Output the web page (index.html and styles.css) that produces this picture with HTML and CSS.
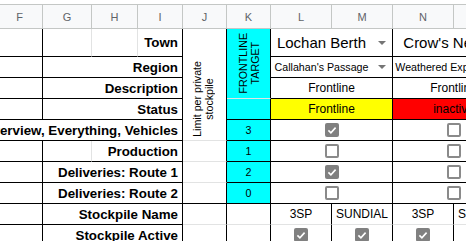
FILE: index.html
```html
<!DOCTYPE html>
<html lang="en">
<head>
    <meta charset="UTF-8">
    <meta name="viewport" content="width=device-width, initial-scale=1.0">
    <title>Stockpile sheet</title>
    <link rel="stylesheet" href="styles.css">
</head>
<body>

<div class="sheet">
    <!-- column headers -->
    <div class="hd">F</div>
    <div class="hd">G</div>
    <div class="hd">H</div>
    <div class="hd">I</div>
    <div class="hd">J</div>
    <div class="hd">K</div>
    <div class="hd">L</div>
    <div class="hd">M</div>
    <div class="hd">N</div>
    <div class="hd">O</div>

    <!-- Town -->
    <div class="c br bb"></div>
    <div class="c bb"></div>
    <div class="c bb"></div>
    <div class="c lbl br bb">Town</div>
    <div class="c br rs5 limit"><span class="rot">Limit per private<br>stockpile</span></div>
    <div class="c br rs3 cyan"><span class="rot">FRONTLINE<br>TARGET</span></div>
    <div class="c cs2 br bb drop big"><span class="val">Lochan Berth</span><i class="arrow"></i></div>
    <div class="c cs2 br bb drop big"><span class="val">Crow's Nest</span><i class="arrow"></i></div>

    <!-- Region -->
    <div class="c br bb"></div>
    <div class="c cs3 lbl br bb">Region</div>
    <div class="c cs2 br bb drop small"><span class="val">Callahan's Passage</span><i class="arrow"></i></div>
    <div class="c cs2 br bb drop small"><span class="val">Weathered Expanse</span><i class="arrow"></i></div>

    <!-- Description -->
    <div class="c br bb"></div>
    <div class="c cs3 lbl br bb">Description</div>
    <div class="c cs2 br bb">Frontline</div>
    <div class="c cs2 br bb">Frontline</div>

    <!-- Status -->
    <div class="c br bb"></div>
    <div class="c cs3 lbl br bb">Status</div>
    <div class="c br bb cyan"></div>
    <div class="c cs2 br bb yellow">Frontline</div>
    <div class="c cs2 br bb red">inactive</div>

    <!-- Tabs -->
    <div class="c cs4 lbl br bb">Overview, Everything, Vehicles</div>
    <div class="c br bb cyan num">3</div>
    <div class="c cs2 br bb"><span class="box on"><svg viewBox="0 0 14 14"><path d="M3.4 7.4 L5.9 9.9 L10.6 4.6"/></svg></span></div>
    <div class="c cs2 br bb"><span class="box"></span></div>

    <!-- Production -->
    <div class="c br bb"></div>
    <div class="c bb"></div>
    <div class="c cs2 lbl br bb">Production</div>
    <div class="c br"></div>
    <div class="c br bb cyan num">1</div>
    <div class="c cs2 br bb"><span class="box"></span></div>
    <div class="c cs2 br bb"><span class="box"></span></div>

    <!-- Deliveries: Route 1 -->
    <div class="c br bb"></div>
    <div class="c cs3 lbl br bb">Deliveries: Route 1</div>
    <div class="c br"></div>
    <div class="c br bb cyan num">2</div>
    <div class="c cs2 br bb"><span class="box on"><svg viewBox="0 0 14 14"><path d="M3.4 7.4 L5.9 9.9 L10.6 4.6"/></svg></span></div>
    <div class="c cs2 br bb"><span class="box"></span></div>

    <!-- Deliveries: Route 2 -->
    <div class="c br bb"></div>
    <div class="c cs3 lbl br bb">Deliveries: Route 2</div>
    <div class="c br bb"></div>
    <div class="c br bb cyan num">0</div>
    <div class="c cs2 br bb"><span class="box"></span></div>
    <div class="c cs2 br bb"><span class="box"></span></div>

    <!-- Stockpile Name -->
    <div class="c br bb"></div>
    <div class="c cs3 lbl br bb">Stockpile Name</div>
    <div class="c br"></div>
    <div class="c br"></div>
    <div class="c br">3SP</div>
    <div class="c br">SUNDIAL</div>
    <div class="c br">3SP</div>
    <div class="c br">SUNDIAL</div>

    <!-- Stockpile Active -->
    <div class="c br bb"></div>
    <div class="c cs3 lbl br bb">Stockpile Active</div>
    <div class="c br"></div>
    <div class="c br"></div>
    <div class="c br"><span class="box on"><svg viewBox="0 0 14 14"><path d="M3.4 7.4 L5.9 9.9 L10.6 4.6"/></svg></span></div>
    <div class="c br"><span class="box on"><svg viewBox="0 0 14 14"><path d="M3.4 7.4 L5.9 9.9 L10.6 4.6"/></svg></span></div>
    <div class="c br"><span class="box on"><svg viewBox="0 0 14 14"><path d="M3.4 7.4 L5.9 9.9 L10.6 4.6"/></svg></span></div>
    <div class="c br"><span class="box on"><svg viewBox="0 0 14 14"><path d="M3.4 7.4 L5.9 9.9 L10.6 4.6"/></svg></span></div>
</div>

</body>
</html>
```

FILE: styles.css
```css
body {
    margin: 0;
    overflow: hidden;
    background-color: #fff;
    font-family: "Liberation Sans", Arial, sans-serif;
    color: #000;
}
.sheet {
    display: grid;
    grid-template-columns: 46px 49px 46px 45px 44px 44px 61px 61px 61px 61px;
    grid-template-rows: 25px 28px repeat(10, 21px);
    width: max-content;
    margin: 4px 0 0 -3px;
}
.hd {
    box-sizing: border-box;
    display: flex;
    align-items: center;
    justify-content: center;
    background-color: #f8f9fa;
    border-top: 1px solid #c4c7c5;
    border-right: 1px solid #c4c7c5;
    border-bottom: 1px solid #c4c7c5;
    color: #5f6368;
    font-size: 11px;
}
.c {
    box-sizing: border-box;
    display: flex;
    align-items: center;
    justify-content: center;
    min-width: 0;
    overflow: hidden;
    white-space: nowrap;
    border-right: 1px solid #e2e3e3;
    border-bottom: 1px solid #e2e3e3;
    font-size: 12px;
}
.br {
    border-right-color: #000;
}
.bb {
    border-bottom-color: #000;
}
.cs2 {
    grid-column: span 2;
}
.cs3 {
    grid-column: span 3;
}
.cs4 {
    grid-column: span 4;
}
.rs3 {
    grid-row: span 3;
}
.rs5 {
    grid-row: span 5;
}
.lbl {
    justify-content: flex-end;
    padding-right: 4px;
    font-weight: bold;
    font-size: 13.33px;
}
.cyan {
    background-color: #00ffff;
}
.yellow {
    background-color: #ffff00;
}
.red {
    background-color: #ff0000;
}
.num {
    font-size: 10.67px;
}
.big {
    font-size: 15px;
}
.small {
    font-size: 10.67px;
}
.drop .val {
    flex: 1;
    text-align: center;
}
.drop .arrow {
    width: 20px;
    display: flex;
    justify-content: center;
}
.drop .arrow::before {
    content: "";
    border-left: 4px solid transparent;
    border-right: 4px solid transparent;
    border-top: 4px solid #757575;
}
.rot {
    writing-mode: vertical-rl;
    transform: rotate(180deg);
    white-space: normal;
    text-align: center;
    font-size: 10.67px;
    line-height: 12px;
}
.limit {
    align-items: flex-end;
    padding: 0 3px 3px 0;
}
.box {
    box-sizing: border-box;
    width: 14px;
    height: 14px;
    border: 2px solid #8a8a8a;
    border-radius: 2px;
    background-color: #fff;
}
.box.on {
    border: none;
    background-color: #808080;
}
.box svg {
    display: block;
    width: 14px;
    height: 14px;
}
.box path {
    fill: none;
    stroke: #fff;
    stroke-width: 1.6;
}
```
